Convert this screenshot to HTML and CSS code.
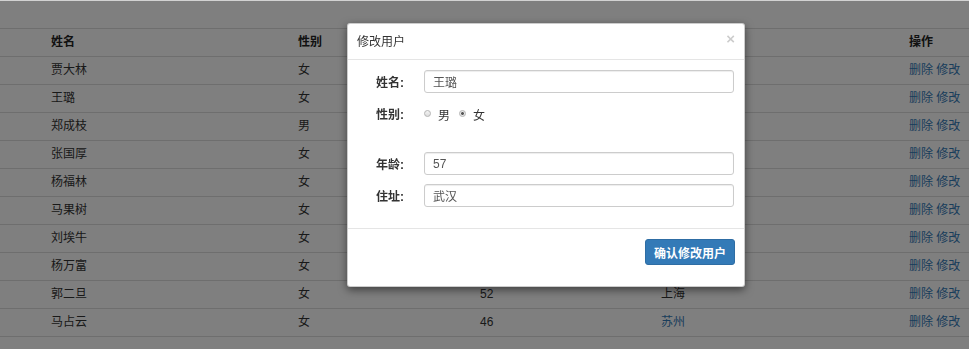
FILE: index.html
```html
<!DOCTYPE html>
<html lang="zh-CN">
<head>
    <meta charset="UTF-8">
    <meta name="viewport" content="width=device-width, initial-scale=1.0">
    <title>用户管理</title>
    <link rel="stylesheet" href="styles.css">
</head>
<body>

    <div class="page">
        <table class="user-table">
            <colgroup>
                <col class="col-id">
                <col class="col-name">
                <col class="col-sex">
                <col class="col-age">
                <col class="col-addr">
                <col class="col-ops">
            </colgroup>
            <thead>
                <tr>
                    <th></th>
                    <th>姓名</th>
                    <th>性别</th>
                    <th>年龄</th>
                    <th>住址</th>
                    <th>操作</th>
                </tr>
            </thead>
            <tbody>
                <tr><td></td><td>贾大林</td><td>女</td><td>34</td><td>北京</td><td><a href="#">删除</a> <a href="#">修改</a></td></tr>
                <tr><td></td><td>王璐</td><td>女</td><td>57</td><td>武汉</td><td><a href="#">删除</a> <a href="#">修改</a></td></tr>
                <tr><td></td><td>郑成枝</td><td>男</td><td>41</td><td>广州</td><td><a href="#">删除</a> <a href="#">修改</a></td></tr>
                <tr><td></td><td>张国厚</td><td>女</td><td>29</td><td>深圳</td><td><a href="#">删除</a> <a href="#">修改</a></td></tr>
                <tr><td></td><td>杨福林</td><td>女</td><td>63</td><td>南京</td><td><a href="#">删除</a> <a href="#">修改</a></td></tr>
                <tr><td></td><td>马果树</td><td>女</td><td>38</td><td>成都</td><td><a href="#">删除</a> <a href="#">修改</a></td></tr>
                <tr><td></td><td>刘埃牛</td><td>女</td><td>45</td><td>杭州</td><td><a href="#">删除</a> <a href="#">修改</a></td></tr>
                <tr><td></td><td>杨万富</td><td>女</td><td>50</td><td>天津</td><td><a href="#">删除</a> <a href="#">修改</a></td></tr>
                <tr><td></td><td>郭二旦</td><td>女</td><td>52</td><td>上海</td><td><a href="#">删除</a> <a href="#">修改</a></td></tr>
                <tr><td></td><td>马占云</td><td>女</td><td>46</td><td class="addr-link">苏州</td><td><a href="#">删除</a> <a href="#">修改</a></td></tr>
            </tbody>
        </table>
    </div>

    <!-- 遮罩层 -->
    <div class="modal-backdrop"></div>

    <!-- 修改用户弹窗 -->
    <div class="modal-content">
        <div class="modal-header">
            <span class="modal-title">修改用户</span>
            <span class="close">&times;</span>
        </div>
        <div class="modal-body">
            <div class="form-row">
                <label class="form-label">姓名:</label>
                <input type="text" class="form-input" value="王璐">
            </div>
            <div class="form-row form-row-sex">
                <label class="form-label">性别:</label>
                <div class="radio-group">
                    <input type="radio" name="sex" class="radio" id="male">
                    <label for="male" class="radio-text">男</label>
                    <input type="radio" name="sex" class="radio" id="female" checked>
                    <label for="female" class="radio-text">女</label>
                </div>
            </div>
            <div class="form-row">
                <label class="form-label">年龄:</label>
                <input type="text" class="form-input" value="57">
            </div>
            <div class="form-row">
                <label class="form-label">住址:</label>
                <input type="text" class="form-input" value="武汉">
            </div>
        </div>
        <div class="modal-footer">
            <button class="btn-primary">确认修改用户</button>
        </div>
    </div>

</body>
</html>
```

FILE: styles.css
```css
/* 全局 */
body {
    margin: 0;
    border-top: 1px solid #d2d2d2;
    font-family: 'Liberation Sans', 'Noto Sans CJK SC', sans-serif;
    font-size: 12px;
    color: #333;
    background-color: #fff;
}

.page {
    padding-top: 27px;
}

/* 表格 */
.user-table {
    width: 100%;
    border-collapse: collapse;
    border-top: 1px solid #ddd;
}

.col-id { width: 43px; }
.col-name { width: 247px; }
.col-sex { width: 182px; }
.col-age { width: 181px; }
.col-addr { width: 248px; }

.user-table th,
.user-table td {
    height: 27px;
    padding: 0 8px;
    line-height: 17px;
    text-align: left;
    border-bottom: 1px solid #ddd;
    white-space: nowrap;
}

.user-table th {
    font-weight: bold;
    color: #222;
}

.user-table a,
.addr-link {
    color: #337ab7;
    text-decoration: none;
}

/* 遮罩 */
.modal-backdrop {
    position: fixed;
    top: 1px;
    left: 0;
    right: 0;
    bottom: 0;
    background-color: #000;
    opacity: 0.5;
}

/* 弹窗 */
.modal-content {
    position: absolute;
    top: 23px;
    left: 347px;
    width: 396px;
    background-color: #fff;
    border: 1px solid rgba(0, 0, 0, 0.2);
    border-radius: 3px;
    box-shadow: 0 3px 9px rgba(0, 0, 0, 0.5);
}

.modal-header {
    display: flex;
    justify-content: space-between;
    align-items: center;
    height: 35px;
    padding: 0 9px 0 9px;
    border-bottom: 1px solid #e5e5e5;
}

.modal-title {
    color: #333;
    line-height: 17px;
    margin-top: 1px;
}

.close {
    font-size: 15px;
    font-weight: bold;
    color: #000;
    opacity: 0.2;
    margin-top: -6px;
}

.modal-body {
    padding: 10px 10px 21px;
}

.form-row {
    display: flex;
    align-items: center;
    height: 23px;
    margin-bottom: 9px;
}

.form-row-sex {
    margin-bottom: 27px;
}

.form-row:last-child {
    margin-bottom: 0;
}

.form-label {
    width: 46px;
    margin-right: 20px;
    text-align: right;
    font-weight: bold;
    color: #333;
}

.form-input {
    flex: 1;
    height: 23px;
    box-sizing: border-box;
    padding: 0 8px;
    border: 1px solid #ccc;
    border-radius: 3px;
    font-family: inherit;
    font-size: 12px;
    color: #555;
    box-shadow: inset 0 1px 1px rgba(0, 0, 0, 0.075);
}

.radio-group {
    display: flex;
    align-items: center;
    padding-top: 2px;
}

.radio {
    appearance: none;
    -webkit-appearance: none;
    width: 5px;
    height: 5px;
    margin: 0 7px 2px 0;
    border: 1px solid #b4b4b4;
    border-radius: 50%;
    background: linear-gradient(#f4f4f4, #dcdcdc);
    box-sizing: content-box;
}

.radio:checked {
    background: radial-gradient(circle, #555 0, #555 1px, #e6e6e6 1.8px);
}

.radio-text {
    margin-right: 9px;
    color: #333;
}

.modal-footer {
    display: flex;
    justify-content: flex-end;
    padding: 10px 9px 21px 10px;
    border-top: 1px solid #e5e5e5;
}

.btn-primary {
    height: 26px;
    padding: 0 8px;
    font-family: inherit;
    font-size: 12px;
    font-weight: bold;
    color: #fff;
    background-color: #337ab7;
    border: 1px solid #2e6da4;
    border-radius: 3px;
    cursor: pointer;
}
```
